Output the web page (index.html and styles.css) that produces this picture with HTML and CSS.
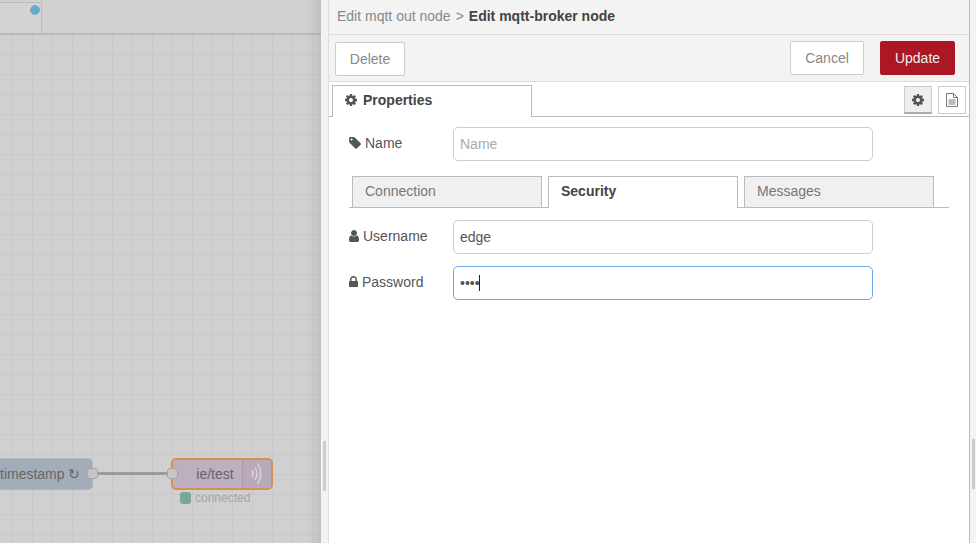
FILE: index.html
```html
<!DOCTYPE html>
<html lang="en">
<head>
    <meta charset="UTF-8">
    <meta name="viewport" content="width=device-width, initial-scale=1.0">
    <title>Edit mqtt-broker node</title>
    <link rel="stylesheet" href="styles.css">
</head>
<body>
    <div class="workspace">
        <div class="flow-tabs">
            <div class="flow-tab"><span class="flow-dot"></span></div>
        </div>
        <div class="canvas">
            <!-- nodes sit on a free canvas -->
            <div class="node node-inject">timestamp ↻</div>
            <span class="port port-out"></span>
            <div class="wire"></div>
            <span class="port port-in"></span>
            <div class="node node-mqtt">
                <span class="node-label">ie/test</span>
                <span class="node-icon">
                    <svg viewBox="0 0 30 28" width="30" height="28" fill="none" stroke="#dcd4dc" stroke-linecap="round" stroke-width="1.500">
                        <path d="M10 10.500q2 3 0 6"/>
                        <path d="M13 7q4 6.500 0 13"/>
                        <path d="M16 3q6 10.500 0 21"/>
                    </svg>
                </span>
            </div>
            <div class="node-status"><span class="status-dot"></span>connected</div>
        </div>
    </div>

    <div class="separator"><span class="handle handle-left"></span></div>

    <div class="tray">
        <div class="tray-title">
            <span class="crumb">Edit mqtt out node</span>
            <span class="crumb-sep">&gt;</span>
            <span class="crumb-current">Edit mqtt-broker node</span>
        </div>
        <div class="tray-toolbar">
            <button class="btn btn-delete" type="button">Delete</button>
            <div class="toolbar-right">
                <button class="btn btn-cancel" type="button">Cancel</button>
                <button class="btn btn-update" type="button">Update</button>
            </div>
        </div>
        <div class="tray-tabs">
            <div class="tray-tab">
                <svg class="icon" viewBox="128 0 1536 1792" width="12" height="14"><use href="#i-cog"/></svg>
                Properties
            </div>
            <div class="tray-side-btns">
                <button class="side-btn side-btn-on" type="button">
                    <svg class="icon" viewBox="128 0 1536 1792" width="12" height="14"><use href="#i-cog"/></svg>
                </button>
                <button class="side-btn" type="button">
                    <svg viewBox="0 0 14 16" width="14" height="16" fill="none" stroke="#777" stroke-width="1">
                        <path d="M1.500 1.500h7l4 4v9h-11z"/>
                        <path d="M8.500 1.500v4h4"/>
                        <path d="M3.500 8h7M3.500 10h7M3.500 12h7"/>
                    </svg>
                </button>
            </div>
        </div>
        <form class="tray-form">
            <div class="form-row">
                <label class="form-label" for="name">
                    <svg class="icon" viewBox="128 0 1515 1792" width="12" height="14"><use href="#i-tag"/></svg>
                    Name
                </label>
                <input class="form-input" type="text" id="name" placeholder="Name">
            </div>
            <div class="form-tabs">
                <div class="form-tab">Connection</div>
                <div class="form-tab form-tab-on">Security</div>
                <div class="form-tab">Messages</div>
            </div>
            <div class="form-row form-row-tight">
                <label class="form-label" for="username">
                    <svg class="icon" viewBox="256 0 1280 1792" width="10" height="14"><use href="#i-user"/></svg>
                    Username
                </label>
                <input class="form-input" type="text" id="username" value="edge">
            </div>
            <div class="form-row form-row-tight">
                <label class="form-label" for="password">
                    <svg class="icon" viewBox="320 0 1152 1792" width="9" height="14"><use href="#i-lock"/></svg>
                    Password
                </label>
                <div class="input-wrap">
                    <input class="form-input form-input-focus" type="password" id="password" value="edge">
                    <span class="caret"></span>
                </div>
            </div>
        </form>
    </div>

    <div class="gutter"><span class="handle handle-right"></span></div>

    <svg class="icon-defs" width="0" height="0">
        <defs>
            <path id="i-cog" d="M1152 896q0-106-75-181t-181-75-181 75-75 181 75 181 181 75 181-75 75-181zm512-109v222q0 12-8 23t-20 13l-185 28q-19 54-39 91 35 50 107 138 10 12 10 25t-9 23q-27 37-99 108t-94 71q-12 0-26-9l-138-108q-44 23-91 38-16 136-29 186-7 28-36 28h-222q-14 0-24.500-8.500t-11.500-21.500l-28-184q-49-16-90-37l-141 107q-10 9-25 9-14 0-25-11-126-114-165-168-7-10-7-23 0-12 8-23 15-21 51-66.500t54-70.500q-27-50-41-99l-183-27q-13-2-21-12.500t-8-23.500v-222q0-12 8-23t19-13l186-28q14-46 39-92-40-57-107-138-10-12-10-24 0-10 9-23 26-36 98.500-107.500t94.500-71.500q13 0 26 10l138 107q44-23 91-38 16-136 29-186 7-28 36-28h222q14 0 24.500 8.500t11.500 21.500l28 184q49 16 90 37l142-107q9-9 24-9 13 0 25 10 129 119 165 170 7 8 7 22 0 12-8 23-15 21-51 66.500t-54 70.500q26 50 41 98l183 28q13 2 21 12.500t8 23.500z"/>
            <path id="i-tag" d="M576 448q0-53-37.500-90.500t-90.500-37.500-90.500 37.500-37.500 90.500 37.500 90.500 90.500 37.500 90.500-37.500 37.500-90.500zm1067 576q0 53-37 90l-491 492q-39 37-91 37-53 0-90-37l-715-716q-38-37-64.500-101t-26.500-117v-416q0-52 38-90t90-38h416q53 0 117 26.500t102 64.500l715 714q37 39 37 91z"/>
            <path id="i-user" d="M1536 1399q0 109-62.500 187t-150.500 78h-854q-88 0-150.500-78t-62.500-187q0-85 8.500-160.500t31.500-152 58.500-131 94-89 134.500-34.500q131 128 313 128t313-128q76 0 134.500 34.500t94 89 58.500 131 31.500 152 8.500 160.500zm-256-887q0 159-112.500 271.500t-271.500 112.500-271.500-112.500-112.500-271.500 112.500-271.500 271.500-112.500 271.500 112.500 112.500 271.500z"/>
            <path id="i-lock" d="M640 768h512v-192q0-106-75-181t-181-75-181 75-75 181v192zm832 96v576q0 40-28 68t-68 28h-960q-40 0-68-28t-28-68v-576q0-40 28-68t68-28h32v-192q0-184 132-316t316-132 316 132 132 316v192h32q40 0 68 28t28 68z"/>
        </defs>
    </svg>
</body>
</html>
```

FILE: styles.css
```css
* {
  box-sizing: border-box;
}

body {
  font-family: "Liberation Sans", Arial, sans-serif;
  font-size: 14px;
  margin: 0;
  height: 100vh;
  overflow: hidden;
  display: flex;
  color: #555;
  background: #fff;
}

.icon {
  fill: #555;
  flex: none;
}

.icon-defs {
  position: absolute;
}

/* dimmed editor behind the tray */
.workspace {
  width: 321px;
  flex: none;
  display: flex;
  flex-direction: column;
  background: #d0d0d0;
  position: relative;
}

.workspace::after {
  content: "";
  position: absolute;
  top: 0;
  right: 0;
  bottom: 0;
  width: 14px;
  background: linear-gradient(to right, rgba(0, 0, 0, 0), rgba(0, 0, 0, 0.07));
}

.flow-tabs {
  height: 35px;
  flex: none;
  border-bottom: 2px solid #b9b9b9;
  padding-top: 2px;
}

.flow-tab {
  width: 42px;
  height: 31px;
  background: #d3d3d3;
  border-top: 1px solid #bcbcbc;
  border-right: 1px solid #bcbcbc;
  position: relative;
}

.flow-dot {
  position: absolute;
  top: 2px;
  right: 1px;
  width: 10px;
  height: 10px;
  border-radius: 50%;
  background: #5eaed0;
  border: 1px solid #7ca9bd;
}

.canvas {
  flex: 1;
  position: relative;
  background-color: #d0d0d0;
  background-image:
    linear-gradient(to right, #c8c8c8 1px, transparent 1px),
    linear-gradient(to bottom, #c8c8c8 1px, transparent 1px);
  background-size: 20px 20px;
  background-position: 12px 19px;
}

.node {
  position: absolute;
  border-radius: 5px;
  color: #666;
}

.node-inject {
  left: -12px;
  top: 423px;
  width: 105px;
  height: 32px;
  line-height: 30px;
  padding-left: 11px;
  background: #a3adb9;
  border: 1px solid #b2b6ba;
}

.node-mqtt {
  left: 171px;
  top: 423px;
  width: 102px;
  height: 32px;
  display: flex;
  background: #bdafbd;
  border: 2px solid #d9904f;
}

.node-label {
  flex: 1;
  text-align: center;
  line-height: 28px;
  padding-left: 15px;
}

.node-icon {
  width: 29px;
  background: #b9aab9;
  border-left: 1px solid #a999a9;
  border-radius: 0 3px 3px 0;
  display: flex;
}

.port {
  position: absolute;
  width: 11px;
  height: 11px;
  border-radius: 3px;
  background: #c6c6c6;
  border: 1px solid #a5a5a5;
  z-index: 1;
}

.port-out {
  left: 87px;
  top: 433px;
}

.port-in {
  left: 167px;
  top: 433px;
}

.wire {
  position: absolute;
  left: 97px;
  top: 437px;
  width: 71px;
  height: 3px;
  background: #9b9b9b;
}

.node-status {
  position: absolute;
  left: 180px;
  top: 456px;
  display: flex;
  align-items: center;
  gap: 4px;
  font-size: 12px;
  color: #a5a5a5;
}

.status-dot {
  width: 11px;
  height: 12px;
  border-radius: 3px;
  background: #7aa896;
}

/* tray */
.separator {
  width: 8px;
  flex: none;
  background: #f3f3f3;
  border-right: 1px solid #ddd;
  position: relative;
}

.handle {
  position: absolute;
  width: 3px;
  height: 50px;
  background: #ccc;
}

.handle-left {
  left: 2px;
  top: 441px;
}

.handle-right {
  left: 2px;
  top: 439px;
}

.tray {
  flex: 1;
  min-width: 0;
  display: flex;
  flex-direction: column;
}

.gutter {
  width: 7px;
  flex: none;
  background: #f3f3f3;
  border-left: 1px solid #bbb;
  position: relative;
}

.tray-title {
  height: 35px;
  flex: none;
  background: #f3f3f3;
  border-bottom: 1px solid #ddd;
  padding: 0 8px;
  line-height: 32px;
  color: #888;
  display: flex;
  gap: 5px;
}

.crumb-current {
  font-weight: bold;
  color: #444;
}

.tray-toolbar {
  height: 47px;
  flex: none;
  background: #f3f3f3;
  border-bottom: 1px solid #ddd;
  padding: 6px 14px 0 6px;
  display: flex;
  justify-content: space-between;
  align-items: flex-start;
}

.toolbar-right {
  display: flex;
  gap: 16px;
}

.btn {
  font-family: inherit;
  font-size: 14px;
  height: 34px;
  padding: 0;
  border-radius: 2px;
  border: 1px solid #ccc;
  background: #fff;
  color: #888;
}

.btn-delete {
  width: 70px;
  margin-top: 1px;
}

.btn-cancel {
  width: 74px;
}

.btn-update {
  width: 75px;
  background: #ad1625;
  border-color: #ad1625;
  color: #eeeeee;
}

.tray-tabs {
  height: 35px;
  flex: none;
  border-bottom: 1px solid #bbb;
  padding: 3px 3px 0 3px;
  display: flex;
  justify-content: space-between;
  align-items: flex-start;
}

.tray-tab {
  width: 200px;
  height: 32px;
  background: #fff;
  border: 1px solid #bbb;
  border-bottom: none;
  padding: 0 0 4px 12px;
  display: flex;
  align-items: center;
  gap: 6px;
  font-weight: bold;
  color: #444;
}

.tray-side-btns {
  display: flex;
  gap: 6px;
  margin-top: 1px;
}

.side-btn {
  width: 28px;
  height: 28px;
  padding: 0;
  background: #fff;
  border: 1px solid #ccc;
  display: flex;
  align-items: center;
  justify-content: center;
}

.side-btn-on {
  background: #efefef;
  border-bottom: 2px solid #aaa;
}

.tray-form {
  padding: 10px 20px 0;
}

.form-row {
  display: flex;
  align-items: flex-start;
}

.form-row-tight {
  margin-bottom: 12px;
}

.form-label {
  width: 104px;
  flex: none;
  display: flex;
  align-items: center;
  gap: 4px;
  height: 32px;
}

.form-input {
  width: 420px;
  height: 34px;
  padding: 0 6px;
  font-family: inherit;
  font-size: 14px;
  color: #555;
  background: #fff;
  border: 1px solid #ccc;
  border-radius: 5px;
  outline: none;
}

.form-input::placeholder {
  color: #aaa;
}

.form-input-focus {
  border-color: #6ea6e6;
}

.input-wrap {
  position: relative;
  display: flex;
}

.caret {
  position: absolute;
  left: 26px;
  top: 9px;
  width: 1px;
  height: 16px;
  background: #222;
}

.form-tabs {
  margin-top: 15px;
  margin-bottom: 12px;
  width: 600px;
  height: 32px;
  padding-left: 3px;
  border-bottom: 1px solid #bbb;
  display: flex;
  gap: 6px;
}

.form-tab {
  width: 190px;
  height: 32px;
  padding-left: 12px;
  line-height: 28px;
  color: #777;
  background: #f0f0f0;
  border: 1px solid #bbb;
}

.form-tab-on {
  background: #fff;
  border-bottom: none;
  color: #444;
  font-weight: bold;
}
```
